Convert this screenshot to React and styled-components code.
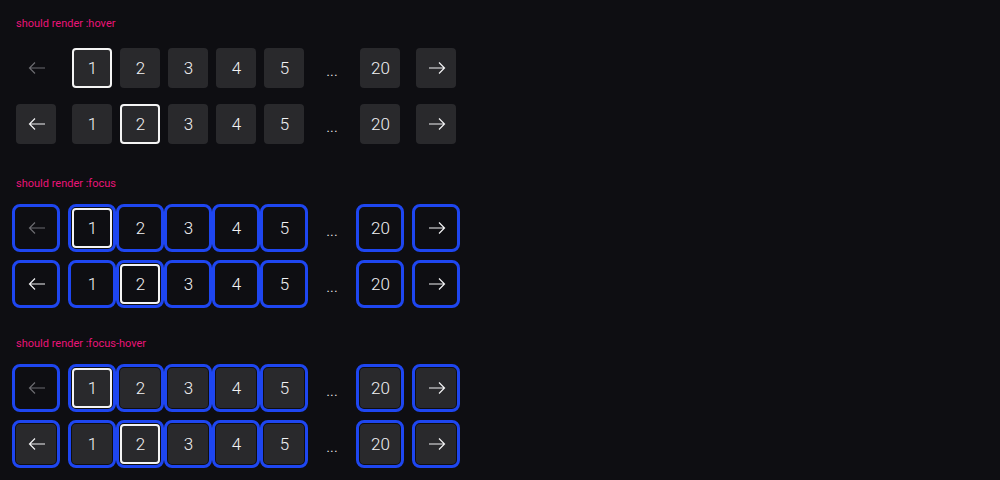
import React from "react";
import styled, { createGlobalStyle, css } from "styled-components";

const GlobalStyle = createGlobalStyle`
  html, body {
    margin: 0;
    padding: 0;
    background: #0e0e12;
  }
  body {
    font-family: Roboto, "Liberation Sans", sans-serif;
  }
`;

const Page = styled.div`
  width: 1000px;
  height: 480px;
  background: #0e0e12;
  overflow: hidden;
`;

const Section = styled.section`
  padding: 16px;
  display: flex;
  flex-direction: column;
  gap: 16px;
`;

const Label = styled.div`
  font-size: 11px;
  line-height: 16px;
  color: #ea1479;
`;

const Row = styled.nav`
  display: flex;
  align-items: center;
  gap: 16px;
  height: 40px;
`;

const Pages = styled.ul`
  display: flex;
  gap: 8px;
  margin: 0;
  padding: 0;
  list-style: none;
`;

const Btn = styled.button`
  box-sizing: border-box;
  width: 40px;
  height: 40px;
  display: flex;
  align-items: center;
  justify-content: center;
  padding: 0 0 0 1px;
  border: 2px solid transparent;
  border-radius: 4px;
  background: transparent;
  color: #f2f2f4;
  font-family: Roboto, "Liberation Sans", sans-serif;
  font-weight: 300;
  font-size: 17px;
  cursor: pointer;

  ${(p) =>
    p.$hover &&
    !p.disabled &&
    css`
      background: #29292c;
    `}

  ${(p) =>
    p.$selected &&
    css`
      border-color: #f4f4f4;
    `}

  ${(p) =>
    p.$focus &&
    css`
      outline: 3px solid #1e46f0;
      outline-offset: 1px;
    `}

  &:disabled {
    color: #6b6b70;
    cursor: default;
  }
`;

const Ellipsis = styled.li`
  width: 40px;
  height: 40px;
  display: flex;
  align-items: center;
  justify-content: center;
  padding-top: 4px;
  box-sizing: border-box;
  color: #f2f2f4;
  font-weight: 300;
  font-size: 16px;
`;

const Arrow = ({ dir }) => (
  <svg width="18" height="18" viewBox="0 0 18 18" fill="none">
    {dir === "left" ? (
      <path d="M17 9H1.5M7 3.5L1.5 9 7 14.5" stroke="currentColor" strokeWidth="1.2" />
    ) : (
      <path d="M1 9h15.5M11 3.5l5.5 5.5-5.5 5.5" stroke="currentColor" strokeWidth="1.2" />
    )}
  </svg>
);

const pages = [1, 2, 3, 4, 5];

const Pagination = ({ current, hover, focus }) => (
  <Row>
    <Btn $hover={hover} $focus={focus} disabled={current === 1}>
      <Arrow dir="left" />
    </Btn>
    <Pages>
      {pages.map((n) => (
        <li key={n}>
          <Btn $hover={hover} $focus={focus} $selected={n === current}>
            {n}
          </Btn>
        </li>
      ))}
      <Ellipsis>...</Ellipsis>
      <li>
        <Btn $hover={hover} $focus={focus}>
          20
        </Btn>
      </li>
    </Pages>
    <Btn $hover={hover} $focus={focus}>
      <Arrow dir="right" />
    </Btn>
  </Row>
);

const states = [
  { label: "should render :hover", hover: true, focus: false },
  { label: "should render :focus", hover: false, focus: true },
  { label: "should render :focus-hover", hover: true, focus: true },
];

export default function App() {
  return (
    <Page>
      <GlobalStyle />
      {states.map((s) => (
        <Section key={s.label}>
          <Label>{s.label}</Label>
          <Pagination current={1} hover={s.hover} focus={s.focus} />
          <Pagination current={2} hover={s.hover} focus={s.focus} />
        </Section>
      ))}
    </Page>
  );
}
